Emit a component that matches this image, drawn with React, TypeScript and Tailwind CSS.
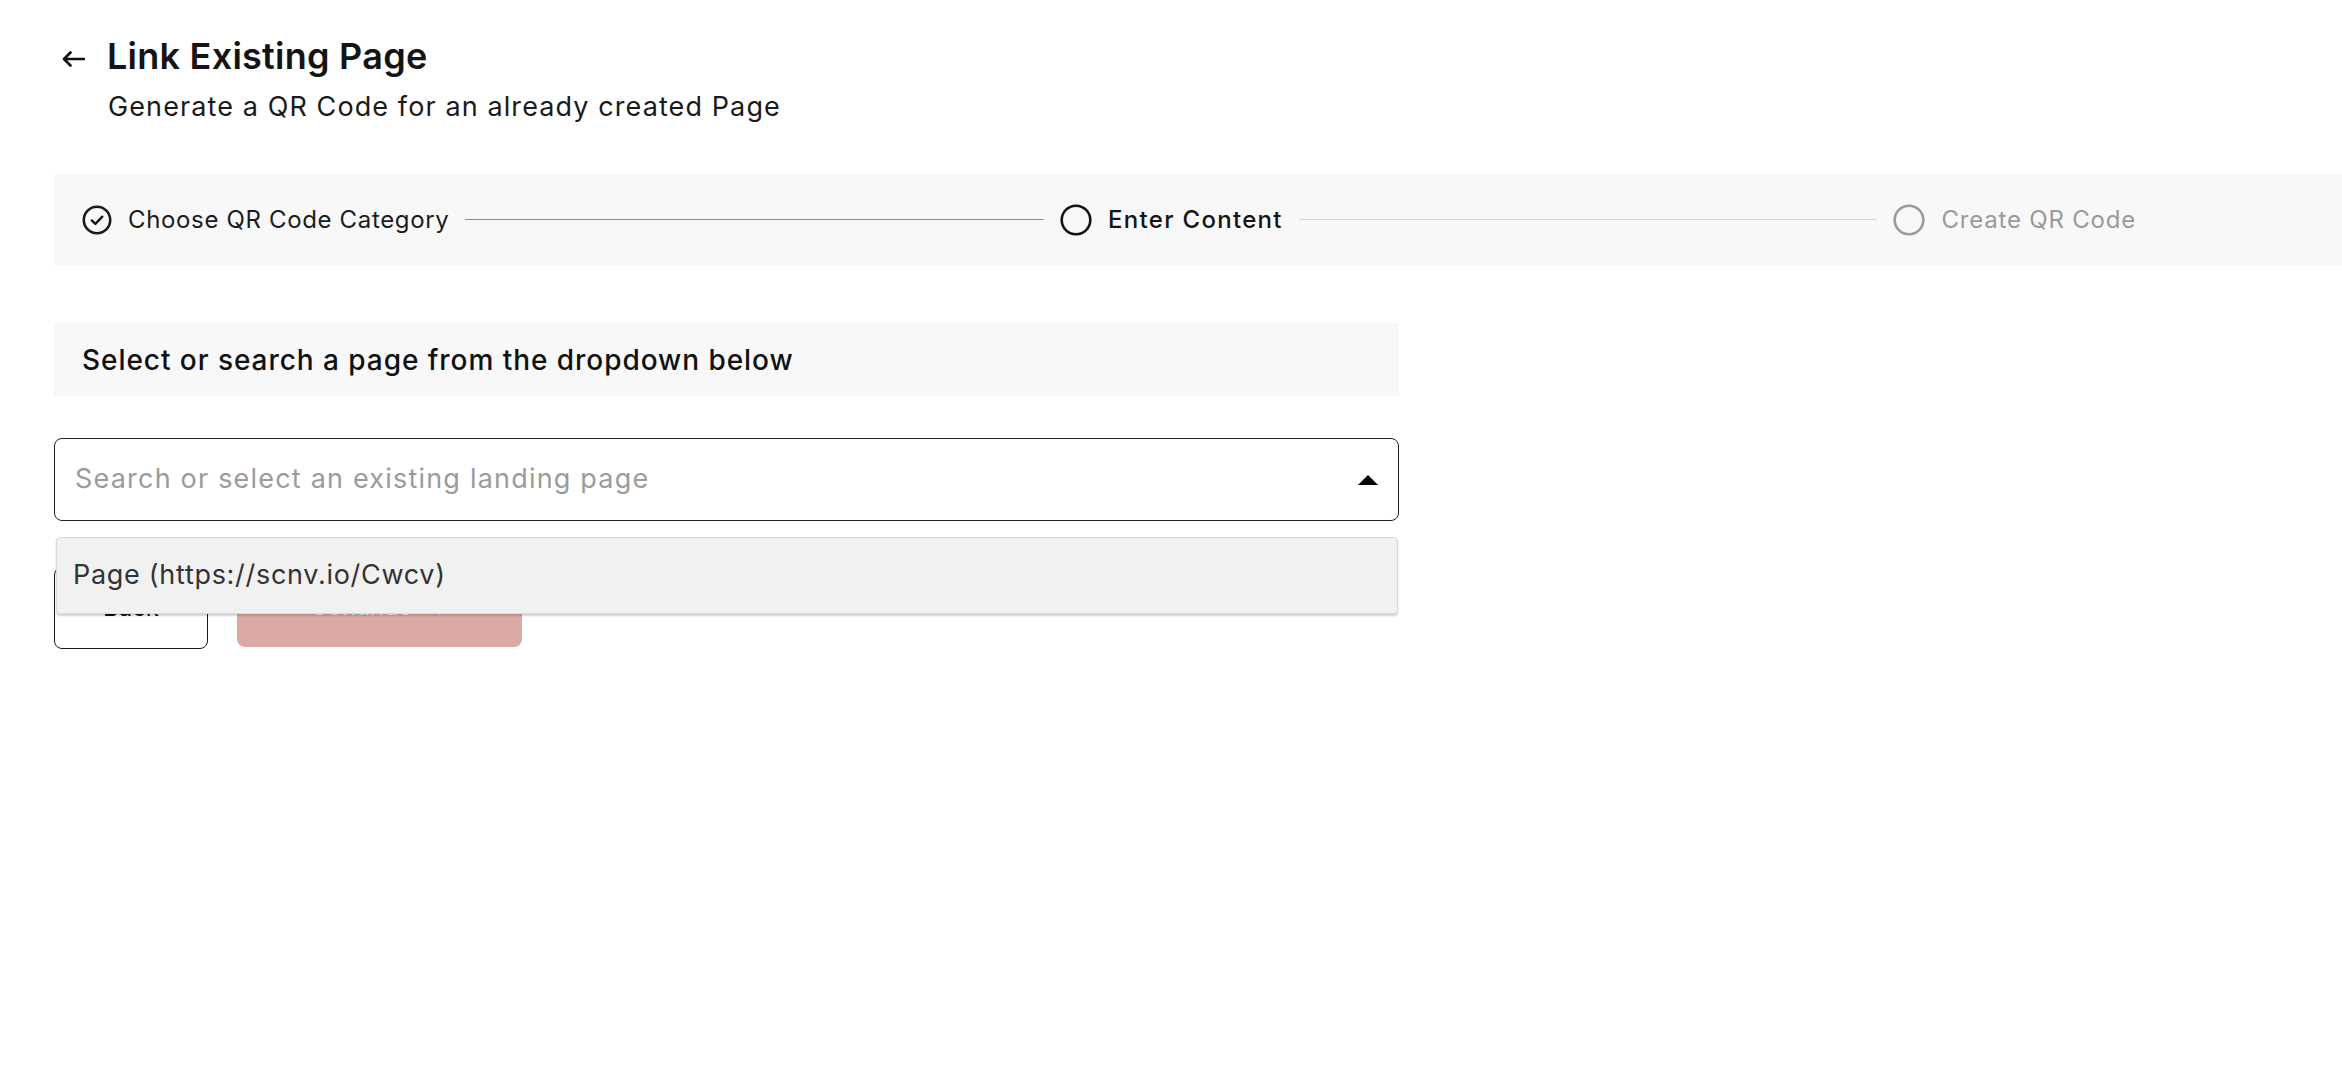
import React from 'react';

const font = { fontFamily: 'Inter, "Noto Sans", sans-serif' };

const CheckCircle: React.FC = () => (
  <svg width="30" height="30" viewBox="0 0 30 30" fill="none">
    <circle cx="15" cy="15" r="13.2" stroke="#1a1a1a" strokeWidth="2.6" />
    <path d="M9.8 15.4l3.6 3.5 6.9-7.2" stroke="#1a1a1a" strokeWidth="2.4" strokeLinecap="round" strokeLinejoin="round" />
  </svg>
);

const OpenCircle: React.FC<{ color: string }> = ({ color }) => (
  <svg width="32" height="32" viewBox="0 0 32 32" fill="none">
    <circle cx="16" cy="16" r="14.3" stroke={color} strokeWidth="2.6" />
  </svg>
);

const Stepper: React.FC = () => (
  <div className="ml-[54px] h-[91px] bg-[#f8f8f8] flex items-center pl-[28px] pr-[206px]">
    <div className="flex items-center gap-[16px] shrink-0">
      <CheckCircle />
      <span className="text-[24px] tracking-[0.65px] text-[#1c1c1c]">Choose QR Code Category</span>
    </div>
    <div className="flex-1 h-[1.5px] bg-[#8c8c8c] mx-[16px]" />
    <div className="flex items-center gap-[16px] shrink-0">
      <OpenCircle color="#141414" />
      <span className="text-[24px] tracking-[1.3px] text-[#141414] font-medium">Enter Content</span>
    </div>
    <div className="flex-1 h-[1.5px] bg-[#d4d4d4] mx-[16px]" />
    <div className="flex items-center gap-[16px] shrink-0">
      <OpenCircle color="#9a9a9a" />
      <span className="text-[24px] tracking-[0.8px] text-[#9a9a9a]">Create QR Code</span>
    </div>
  </div>
);

export default function App() {
  return (
    <div className="min-h-screen w-full bg-white text-[#111]" style={font}>
      {/* Header */}
      <div className="pt-[34px] pl-[62px]">
        <div className="flex items-center gap-[22px] h-[44px]">
          <svg width="23" height="16" viewBox="0 0 23 16" fill="none" className="mt-[6px]">
            <path d="M22 8H2.5M8.5 1.5L2 8l6.5 6.5" stroke="#111" strokeWidth="2.6" strokeLinecap="round" strokeLinejoin="round" />
          </svg>
          <h1 className="text-[36px] font-semibold tracking-[0.25px] text-[#141414]">Link Existing Page</h1>
        </div>
        <p className="ml-[46px] mt-[12px] text-[27px] leading-[34px] tracking-[1.1px] text-[#1a1a1a]">
          Generate a QR Code for an already created Page
        </p>
      </div>

      {/* Stepper */}
      <div className="mt-[50px]">
        <Stepper />
      </div>

      {/* Content */}
      <div className="ml-[54px] w-[1345px] mt-[58px]">
        <div className="h-[73px] bg-[#f8f8f8] flex items-center pl-[28px]">
          <span className="text-[28px] font-medium tracking-[0.95px] text-[#111]">Select or search a page from the dropdown below</span>
        </div>

        <div className="relative mt-[42px]">
          <div className="h-[83px] border border-[#1f1f1f] rounded-[8px] flex items-center pl-[20px] pr-[20px]">
            <span className="flex-1 text-[27px] tracking-[1.2px] text-[#9b9b9b]">Search or select an existing landing page</span>
            <svg width="20" height="10" viewBox="0 0 20 10">
              <path d="M0 10L10 0l10 10z" fill="#000" />
            </svg>
          </div>

          <div className="absolute left-[2px] right-[1px] top-[99px] h-[77px] z-10 bg-[#f1f1f1] border border-[#dadada] rounded-[4px] shadow-[0_2px_2px_rgba(0,0,0,0.18)] flex items-center pl-[16px]">
            <span className="text-[27px] tracking-[0.7px] text-[#333]">Page (https://scnv.io/Cwcv)</span>
          </div>

          <div className="flex gap-[29px] mt-[46px]">
            <button className="h-[82px] w-[154px] border border-[#1a1a1a] rounded-[8px] bg-white text-[24px] text-[#111]">
              Back
            </button>
            <button className="h-[80px] w-[285px] rounded-[8px] bg-[#dcaaa4] text-[24px] text-white flex items-center justify-center gap-[14px]">
              Continue
              <span>→</span>
            </button>
          </div>
        </div>
      </div>
    </div>
  );
}
